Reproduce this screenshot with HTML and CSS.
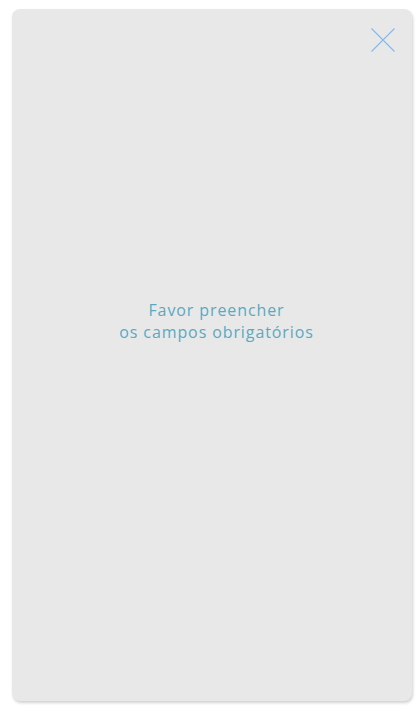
FILE: index.html
```html
<!DOCTYPE html>
<html lang="pt">
<head>
<meta charset="utf-8">
<link rel="stylesheet" href="styles.css">
</head>
<body>
<div class="modal">
  <button class="close" aria-label="Fechar">
    <svg width="24" height="24" viewBox="0 0 24 24"><path d="M0.5 0.5 L23.5 23.5 M23.5 0.5 L0.5 23.5" stroke="#86b9ee" stroke-width="1.1" fill="none"/></svg>
  </button>
  <p class="message">Favor preencher<br>os campos obrigatórios</p>
</div>
</body>
</html>
```
FILE: styles.css
```css
html, body { margin: 0; padding: 0; background: #ffffff; }
body { padding: 9px 5px 10px 12px; }
.modal {
  position: relative;
  width: 400px;
  height: 692px;
  background: #e8e8e8;
  border-radius: 8px;
  box-shadow: 1px 2px 3px rgba(0,0,0,0.18);
  display: flex;
  align-items: center;
  justify-content: center;
}
.close {
  position: absolute;
  top: 19px;
  right: 17px;
  padding: 0;
  border: 0;
  background: none;
  width: 24px;
  height: 24px;
  display: block;
}
.close svg { display: block; }
.message {
  margin: 0 0 68px 9px;
  text-align: center;
  font-family: "Open Sans", sans-serif;
  font-size: 16px;
  line-height: 22px;
  letter-spacing: 0.9px;
  color: #5aa9c1;
}
```
